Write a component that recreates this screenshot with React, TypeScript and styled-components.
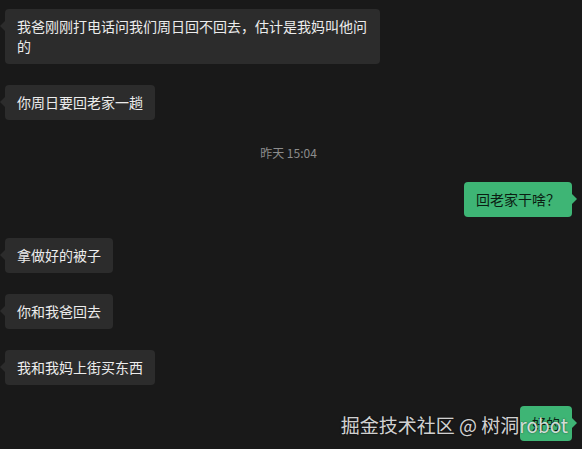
import React from 'react';
import styled, { createGlobalStyle, css } from 'styled-components';

const GlobalStyle = createGlobalStyle`
  html, body {
    margin: 0;
    padding: 0;
    background: #191919;
  }
  * {
    box-sizing: border-box;
  }
`;

const Page = styled.div`
  position: relative;
  width: 582px;
  height: 449px;
  overflow: hidden;
  background: #191919;
  padding: 9px 10px 0 5px;
  font-family: 'Noto Sans CJK SC', 'Noto Sans', sans-serif;
`;

const List = styled.div`
  display: flex;
  flex-direction: column;
  gap: 21px;
`;

const Row = styled.div<{ $mine?: boolean }>`
  display: flex;
  justify-content: ${(p) => (p.$mine ? 'flex-end' : 'flex-start')};
`;

const Bubble = styled.div<{ $mine?: boolean }>`
  position: relative;
  max-width: 375px;
  padding: 7px 12px 8px;
  border-radius: 4px;
  font-size: 14px;
  line-height: 20px;
  word-break: break-all;
  background: #2c2c2c;
  color: #ececec;

  &::before {
    content: '';
    position: absolute;
    top: 12px;
    width: 0;
    height: 0;
    border-style: solid;
    ${(p) =>
      p.$mine
        ? css`
            right: -5px;
            border-width: 5px 0 5px 5px;
            border-color: transparent transparent transparent #3eb575;
          `
        : css`
            left: -5px;
            border-width: 5px 5px 5px 0;
            border-color: transparent #2c2c2c transparent transparent;
          `}
  }

  ${(p) =>
    p.$mine &&
    css`
      background: #3eb575;
      color: #0b1d12;
    `}
`;

const Time = styled.div`
  text-align: center;
  font-size: 12px;
  line-height: 17px;
  padding-top: 3px;
  color: #8c8c8c;
`;

const Watermark = styled.div`
  position: absolute;
  right: 14px;
  bottom: 13px;
  font-size: 19px;
  line-height: 22px;
  color: rgba(236, 236, 236, 0.9);
  text-shadow: 0 0 2px rgba(0, 0, 0, 0.55);
  white-space: nowrap;
  pointer-events: none;
`;

type Msg =
  | { kind: 'text'; mine?: boolean; text: string }
  | { kind: 'time'; text: string };

const messages: Msg[] = [
  {
    kind: 'text',
    text: '我爸刚刚打电话问我们周日回不回去，估计是我妈叫他问的',
  },
  { kind: 'text', text: '你周日要回老家一趟' },
  { kind: 'time', text: '昨天 15:04' },
  { kind: 'text', mine: true, text: '回老家干啥？' },
  { kind: 'text', text: '拿做好的被子' },
  { kind: 'text', text: '你和我爸回去' },
  { kind: 'text', text: '我和我妈上街买东西' },
  { kind: 'text', mine: true, text: '好的' },
];

export default function App() {
  return (
    <>
      <GlobalStyle />
      <Page>
        <List>
          {messages.map((m, i) =>
            m.kind === 'time' ? (
              <Time key={i}>{m.text}</Time>
            ) : (
              <Row key={i} $mine={m.mine}>
                <Bubble $mine={m.mine}>{m.text}</Bubble>
              </Row>
            )
          )}
        </List>
        <Watermark>掘金技术社区 @ 树洞robot</Watermark>
      </Page>
    </>
  );
}
